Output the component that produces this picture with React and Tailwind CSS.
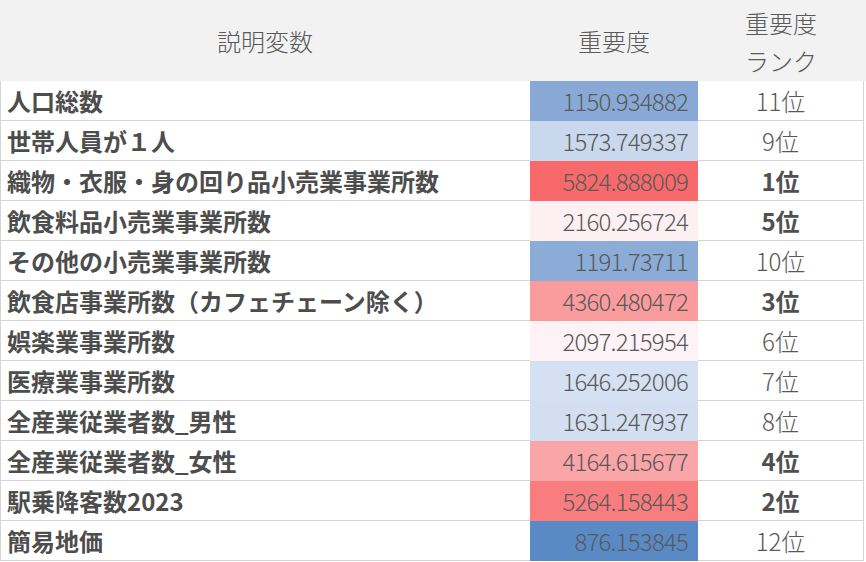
const rows = [
  { name: "人口総数", value: "1150.934882", rank: "11位", bold: false, bg: "bg-[#88a9d6]" },
  { name: "世帯人員が１人", value: "1573.749337", rank: "9位", bold: false, bg: "bg-[#c9d8ed]" },
  { name: "織物・衣服・身の回り品小売業事業所数", value: "5824.888009", rank: "1位", bold: true, bg: "bg-[#f8696b]" },
  { name: "飲食料品小売業事業所数", value: "2160.256724", rank: "5位", bold: true, bg: "bg-[#fdf0f3]" },
  { name: "その他の小売業事業所数", value: "1191.73711", rank: "10位", bold: false, bg: "bg-[#8cacd8]" },
  { name: "飲食店事業所数（カフェチェーン除く）", value: "4360.480472", rank: "3位", bold: true, bg: "bg-[#fa9c9e]" },
  { name: "娯楽業事業所数", value: "2097.215954", rank: "6位", bold: false, bg: "bg-[#fdf2f5]" },
  { name: "医療業事業所数", value: "1646.252006", rank: "7位", bold: false, bg: "bg-[#d5e0f2]" },
  { name: "全産業従業者数_男性", value: "1631.247937", rank: "8位", bold: false, bg: "bg-[#d3def1]" },
  { name: "全産業従業者数_女性", value: "4164.615677", rank: "4位", bold: true, bg: "bg-[#faa5a7]" },
  { name: "駅乗降客数2023", value: "5264.158443", rank: "2位", bold: true, bg: "bg-[#f97d7f]" },
  { name: "簡易地価", value: "876.153845", rank: "12位", bold: false, bg: "bg-[#5a8ac6]" },
];

const font = { fontFamily: '"Noto Sans CJK JP", "Noto Sans", sans-serif' };

export default function App() {
  return (
    <div className="w-[866px] h-[562px] bg-white text-[#595959]" style={font}>
      <div className="grid grid-cols-[530px_168px_168px] h-[81px] bg-[#f2f2f2] text-[24px] font-light">
        <div className="flex items-center justify-center">説明変数</div>
        <div className="flex items-center justify-center">重要度</div>
        <div className="flex flex-col items-center justify-center leading-[38px] pr-[2px] pt-[2px]">
          <span>重要度</span>
          <span>ランク</span>
        </div>
      </div>
      <div className="w-[864px]">
        {rows.map((r) => (
          <div key={r.name} className="grid grid-cols-[530px_168px_166px] h-[40px]">
            <div className="flex items-center border-l border-b border-[#d4d4d4] pl-[6px] text-[24px] font-bold text-[#4d4d4d] whitespace-nowrap">
              {r.name}
            </div>
            <div className={`flex items-center justify-end pr-[10px] text-[24px] font-light tracking-[-0.8px] ${r.bg}`}>
              {r.value}
            </div>
            <div
              className={`flex items-center justify-center border-r border-b border-[#d4d4d4] text-[24px] ${
                r.bold ? "font-bold text-[#505050]" : "font-light"
              }`}
            >
              {r.rank}
            </div>
          </div>
        ))}
      </div>
    </div>
  );
}
